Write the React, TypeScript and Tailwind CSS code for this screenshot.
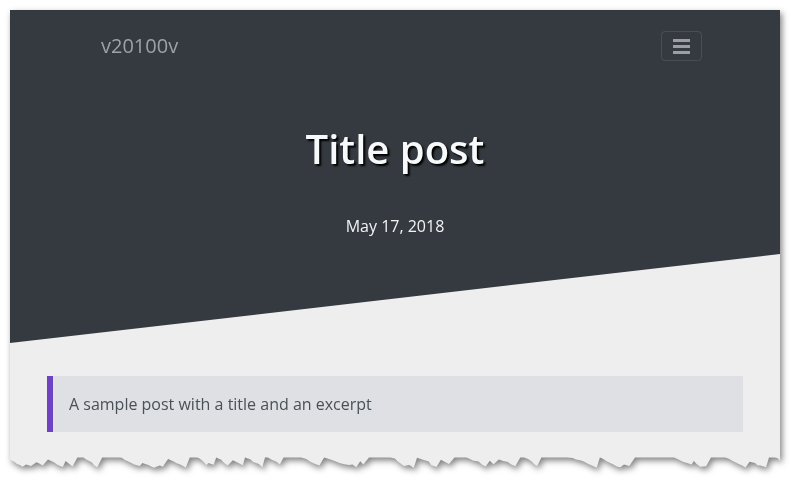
import React from 'react';

// seeded random so the torn edge is the same on every render
function makeRandom(seed: number) {
  let s = seed;
  return () => {
    s = (s * 16807) % 2147483647;
    return (s - 1) / 2147483646;
  };
}

function tornEdgePath(width: number, height: number) {
  const rand = makeRandom(42);
  const pts: string[] = [`M0 0`, `L${width} 0`];
  let x = width;
  let y = 4;
  pts.push(`L${width} ${y}`);
  while (x > 0) {
    const step = 2 + rand() * 4;
    x = Math.max(0, x - step);
    // small mountains: drift up slowly, drop fast
    if (rand() < 0.22) {
      y = 7 + rand() * 4;
    } else {
      y = Math.max(0.5, y - 1 - rand() * 2.5);
    }
    pts.push(`L${x.toFixed(1)} ${Math.min(height - 1, y).toFixed(1)}`);
  }
  pts.push(`L0 0 Z`);
  return pts.join(' ');
}

function Navbar() {
  return (
    <nav className="h-[72px] flex items-center justify-between pl-[91px] pr-[78px]">
      <a className="text-[20px] text-[#9ea2a6] leading-none">v20100v</a>
      <button className="w-[41px] h-[30px] rounded-[4px] border border-white/10 flex flex-col items-center justify-center gap-[3px]">
        <span className="block w-[17px] h-[3px] bg-[#9b9ea2]" />
        <span className="block w-[17px] h-[3px] bg-[#9b9ea2]" />
        <span className="block w-[17px] h-[3px] bg-[#9b9ea2]" />
      </button>
    </nav>
  );
}

function Header() {
  return (
    <header className="bg-[#343a40] flex flex-col">
      <Navbar />
      <h1 className="mt-[43px] text-center text-[40px] leading-[48px] font-semibold text-[#f8f9fa] [text-shadow:2px_2px_2px_#000]">
        Title post
      </h1>
      <p className="mt-[41px] text-center text-[16px] leading-[24px] text-[#f1f2f3]">May 17, 2018</p>
      {/* diagonal cut into the light body */}
      <svg className="block" width="770" height="105" viewBox="0 0 770 105" preserveAspectRatio="none">
        <polygon points="0,105 770,16 770,105" fill="#eeeeee" />
      </svg>
    </header>
  );
}

export default function App() {
  const edge = tornEdgePath(770, 13);
  return (
    <div className="w-[791px] h-[484px] bg-white overflow-hidden pt-[10px] pl-[10px] font-['Open_Sans',sans-serif]">
      <div className="w-[770px] drop-shadow-[2px_3px_3px_rgba(0,0,0,0.5)]">
        <Header />
        <main className="bg-[#eeeeee] pt-[33px] pb-[25px] px-[37px]">
          <blockquote className="bg-[#dee0e4] border-l-[6px] border-[#6f42c1] py-[16px] pl-[16px] text-[16px] leading-[24px] text-[#495057]">
            A sample post with a title and an excerpt
          </blockquote>
        </main>
        <svg className="block" width="770" height="13" viewBox="0 0 770 13">
          <path d={edge} fill="#eeeeee" />
        </svg>
      </div>
    </div>
  );
}
